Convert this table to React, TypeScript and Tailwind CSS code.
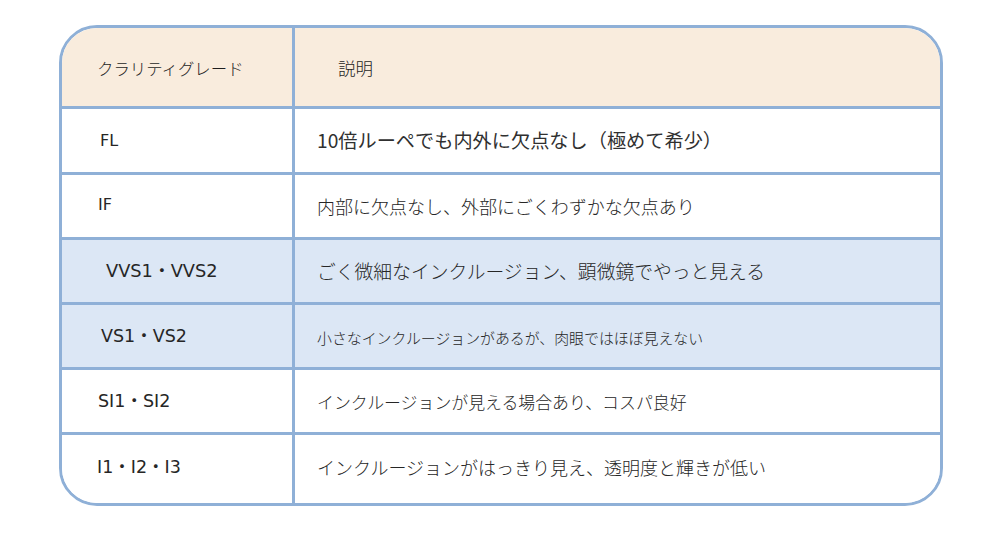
import React from "react";

const jp = '"Noto Sans CJK JP", "Noto Sans", sans-serif';
const latin = '"DejaVu Sans", "Noto Sans CJK JP", sans-serif';

type Row = {
  grade: string;
  gradeCls: string;
  desc: string;
  descCls: string;
  bg: string;
  h: string;
};

const rows: Row[] = [
  {
    grade: "FL",
    gradeCls: "pl-[38px] text-[16px]",
    desc: "10倍ルーペでも内外に欠点なし（極めて希少）",
    descCls: "text-[19.2px] font-normal text-[#303030]",
    bg: "bg-white",
    h: "h-[63px]",
  },
  {
    grade: "IF",
    gradeCls: "pl-[36px] text-[16px] -mt-[2px]",
    desc: "内部に欠点なし、外部にごくわずかな欠点あり",
    descCls: "text-[18px] font-light text-[#262626]",
    bg: "bg-white",
    h: "h-[62px]",
  },
  {
    grade: "VVS1・VVS2",
    gradeCls: "pl-[44px] text-[17.8px]",
    desc: "ごく微細なインクルージョン、顕微鏡でやっと見える",
    descCls: "text-[18.8px] font-light text-[#262626]",
    bg: "bg-[#dce7f5]",
    h: "h-[62px]",
  },
  {
    grade: "VS1・VS2",
    gradeCls: "pl-[39px] text-[17.5px]",
    desc: "小さなインクルージョンがあるが、肉眼ではほぼ見えない",
    descCls: "text-[14.9px] font-light text-[#262626] mt-[4px]",
    bg: "bg-[#dce7f5]",
    h: "h-[62px]",
  },
  {
    grade: "SI1・SI2",
    gradeCls: "pl-[36px] text-[17.5px]",
    desc: "インクルージョンが見える場合あり、コスパ良好",
    descCls: "text-[16.9px] font-light text-[#262626] mt-[2px]",
    bg: "bg-white",
    h: "h-[62px]",
  },
  {
    grade: "I1・I2・I3",
    gradeCls: "pl-[35px] text-[17.5px] -mt-[3px]",
    desc: "インクルージョンがはっきり見え、透明度と輝きが低い",
    descCls: "text-[18px] font-light text-[#262626] -mt-[3px]",
    bg: "bg-white",
    h: "h-[68px]",
  },
];

export default function App() {
  return (
    <div className="w-[1000px] h-[536px] bg-white pt-[25px] pl-[59px]">
      <div className="w-[884px] h-[481px] border-[3px] border-[#8fb0d7] rounded-[38px] overflow-hidden flex flex-col">
        <div className="flex h-[81px] border-b-[3px] border-[#8fb0d7] bg-[#f9ecdd] shrink-0">
          <div
            className="w-[233px] shrink-0 border-r-[3px] border-[#8fb0d7] flex items-center pl-[35px] pt-[3px] text-[16.4px] font-light text-[#1e1e1e]"
            style={{ fontFamily: jp }}
          >
            クラリティグレード
          </div>
          <div
            className="flex-1 flex items-center pl-[43px] pt-[3px] text-[17.5px] font-light text-[#1e1e1e]"
            style={{ fontFamily: jp }}
          >
            説明
          </div>
        </div>
        {rows.map((r, i) => (
          <div
            key={r.grade}
            className={`flex shrink-0 ${r.bg} ${
              i < rows.length - 1 ? "border-b-[3px] border-[#8fb0d7]" : ""
            }`}
          >
            <div
              className={`w-[233px] shrink-0 border-r-[3px] border-[#8fb0d7] flex items-center ${r.h}`}
            >
              <span
                className={`text-[#262626] ${r.gradeCls}`}
                style={{ fontFamily: latin }}
              >
                {r.grade}
              </span>
            </div>
            <div className={`flex-1 flex items-center pl-[22px] ${r.h}`}>
              <span className={r.descCls} style={{ fontFamily: jp }}>
                {r.desc}
              </span>
            </div>
          </div>
        ))}
      </div>
    </div>
  );
}
